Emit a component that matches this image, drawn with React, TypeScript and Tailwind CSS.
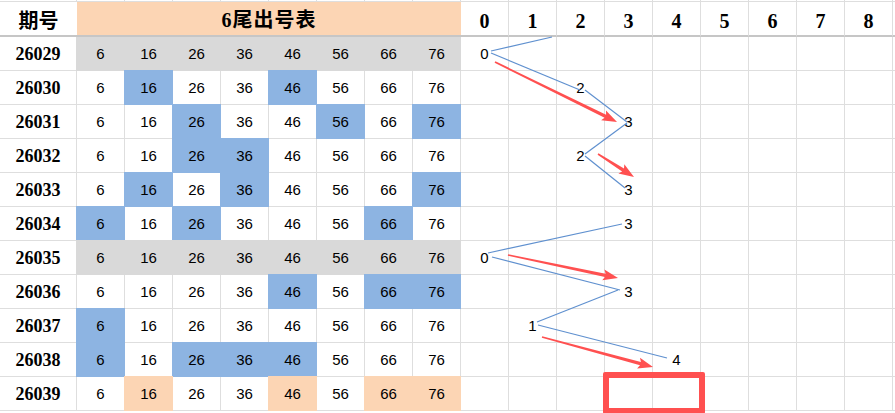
const NUMS = [6, 16, 26, 36, 46, 56, 66, 76]

type Row = {
  id: string
  hl: number[]
  fill: 'blue' | 'gray' | 'peach'
  v?: number
}

const ROWS: Row[] = [
  { id: '26029', hl: [0, 1, 2, 3, 4, 5, 6, 7], fill: 'gray', v: 0 },
  { id: '26030', hl: [1, 4], fill: 'blue', v: 2 },
  { id: '26031', hl: [2, 5, 7], fill: 'blue', v: 3 },
  { id: '26032', hl: [2, 3], fill: 'blue', v: 2 },
  { id: '26033', hl: [1, 3, 7], fill: 'blue', v: 3 },
  { id: '26034', hl: [0, 2, 6], fill: 'blue', v: 3 },
  { id: '26035', hl: [0, 1, 2, 3, 4, 5, 6, 7], fill: 'gray', v: 0 },
  { id: '26036', hl: [4, 6, 7], fill: 'blue', v: 3 },
  { id: '26037', hl: [0], fill: 'blue', v: 1 },
  { id: '26038', hl: [0, 2, 3, 4], fill: 'blue', v: 4 },
  { id: '26039', hl: [1, 4, 6, 7], fill: 'peach' },
]

const FILL = {
  blue: 'bg-[#8db4e2] border-[#8db4e2]',
  gray: 'bg-[#d9d9d9] border-[#d9d9d9]',
  peach: 'bg-[#fcd5b4] border-[#fcd5b4]',
}

const SHADOW_FULL = {
  blue: 'shadow-[-1px_-1px_0_#8db4e2,-1px_0_0_#8db4e2,0_-1px_0_#8db4e2]',
  gray: 'shadow-[-1px_-1px_0_#d9d9d9,-1px_0_0_#d9d9d9,0_-1px_0_#d9d9d9]',
  peach: 'shadow-[-1px_-1px_0_#fcd5b4,-1px_0_0_#fcd5b4,0_-1px_0_#fcd5b4]',
}

const SHADOW_LEFT = {
  blue: 'shadow-[-1px_0_0_#8db4e2]',
  gray: 'shadow-[-1px_0_0_#d9d9d9]',
  peach: 'shadow-[-1px_0_0_#fcd5b4]',
}

const LINES = [
  [491, 51, 552, 37],
  [491, 53, 580, 90],
  [585, 90, 627, 122],
  [627, 123, 585, 154],
  [585, 156, 625, 188],
  [622, 224, 488, 253],
  [492, 257, 620, 290],
  [618, 290, 537, 322],
  [538, 325, 667, 358],
]

const ARROWS = [
  [495, 62, 617, 122],
  [598, 154, 634, 177],
  [508, 255, 618, 278],
  [542, 337, 653, 367],
]

function arrowPoints(x1: number, y1: number, x2: number, y2: number) {
  const len = Math.hypot(x2 - x1, y2 - y1)
  const ux = (x2 - x1) / len
  const uy = (y2 - y1) / len
  const nx = -uy
  const ny = ux
  const head = 13
  const bx = x2 - ux * head
  const by = y2 - uy * head
  const w0 = 0.8
  const w1 = 1.7
  const hw = 5.5
  const pts = [
    [x1 + nx * w0, y1 + ny * w0],
    [bx + nx * w1, by + ny * w1],
    [bx - ux * 2 + nx * hw, by - uy * 2 + ny * hw],
    [x2, y2],
    [bx - ux * 2 - nx * hw, by - uy * 2 - ny * hw],
    [bx - nx * w1, by - ny * w1],
    [x1 - nx * w0, y1 - ny * w0],
  ]
  return pts.map((p) => `${p[0].toFixed(1)},${p[1].toFixed(1)}`).join(' ')
}

const line = 'border-[#dedede]'
const num = "font-['Liberation_Sans',sans-serif] text-[15px] text-black"

export default function App() {
  return (
    <div className="relative h-[413px] w-[895px] overflow-hidden bg-white">
      <div className="grid grid-cols-[77px_repeat(18,48px)]">
        {/* sliver of the row above */}
        {Array.from({ length: 19 }).map((_, i) => (
          <div
            key={`t${i}`}
            className={`h-[2px] border-r border-b ${line}`}
          />
        ))}

        {/* header */}
        <div className="flex h-[35px] items-center justify-center border-b-2 border-[#c6c6c6] bg-white pt-[3px] font-['Noto_Sans_CJK_SC',sans-serif] text-[20px] font-bold text-black">
          期号
        </div>
        <div className="col-span-8 flex h-[35px] items-center justify-center border-b-2 border-[#c6c6c6] bg-[#fcd5b4] pt-[3px] font-['Liberation_Serif','Noto_Sans_CJK_SC',serif] text-[20px] font-bold tracking-[1px] text-black">
          6尾出号表
        </div>
        {Array.from({ length: 10 }).map((_, d) => (
          <div
            key={`h${d}`}
            className="flex h-[35px] items-center justify-center border-r border-b-2 border-r-[#dedede] border-b-[#c6c6c6] pt-[4px] font-['Liberation_Serif',serif] text-[20px] font-bold text-black"
          >
            {d < 9 ? d : ''}
          </div>
        ))}

        {/* data rows */}
        {ROWS.map((r, ri) => (
          <div key={r.id} className="contents">
            <div
              className={`flex h-[34px] items-center justify-center border-r border-b ${line} pt-px font-['Liberation_Serif',serif] text-[18px] font-bold text-black`}
            >
              {r.id}
            </div>
            {NUMS.map((n, i) => {
              const on = r.hl.includes(i)
              const cls = on
                ? `${FILL[r.fill]} ${ri === 0 ? SHADOW_LEFT[r.fill] : SHADOW_FULL[r.fill]}`
                : `bg-white ${line}`
              return (
                <div
                  key={n}
                  className={`flex h-[34px] items-center justify-center border-r border-b pt-px ${num} ${cls}`}
                >
                  {n}
                </div>
              )
            })}
            {Array.from({ length: 10 }).map((_, d) => (
              <div
                key={`c${d}`}
                className={`flex h-[34px] items-center justify-center border-r border-b ${line} pt-px ${num}`}
              >
                {r.v === d ? d : ''}
              </div>
            ))}
          </div>
        ))}
      </div>

      {/* trend lines and arrows drawn over the grid */}
      <svg
        className="pointer-events-none absolute top-0 left-0"
        width={895}
        height={413}
        viewBox="0 0 895 413"
      >
        {LINES.map(([x1, y1, x2, y2], i) => (
          <line
            key={i}
            x1={x1}
            y1={y1}
            x2={x2}
            y2={y2}
            stroke="#5f90cf"
            strokeWidth={1.2}
          />
        ))}
        {ARROWS.map(([x1, y1, x2, y2], i) => (
          <polygon key={i} points={arrowPoints(x1, y1, x2, y2)} fill="#ff5050" />
        ))}
      </svg>

      <div className="pointer-events-none absolute top-[372px] left-[603px] h-[42px] w-[102px] rounded-[2px] border-[6px] border-[#ff5050]" />
    </div>
  )
}
